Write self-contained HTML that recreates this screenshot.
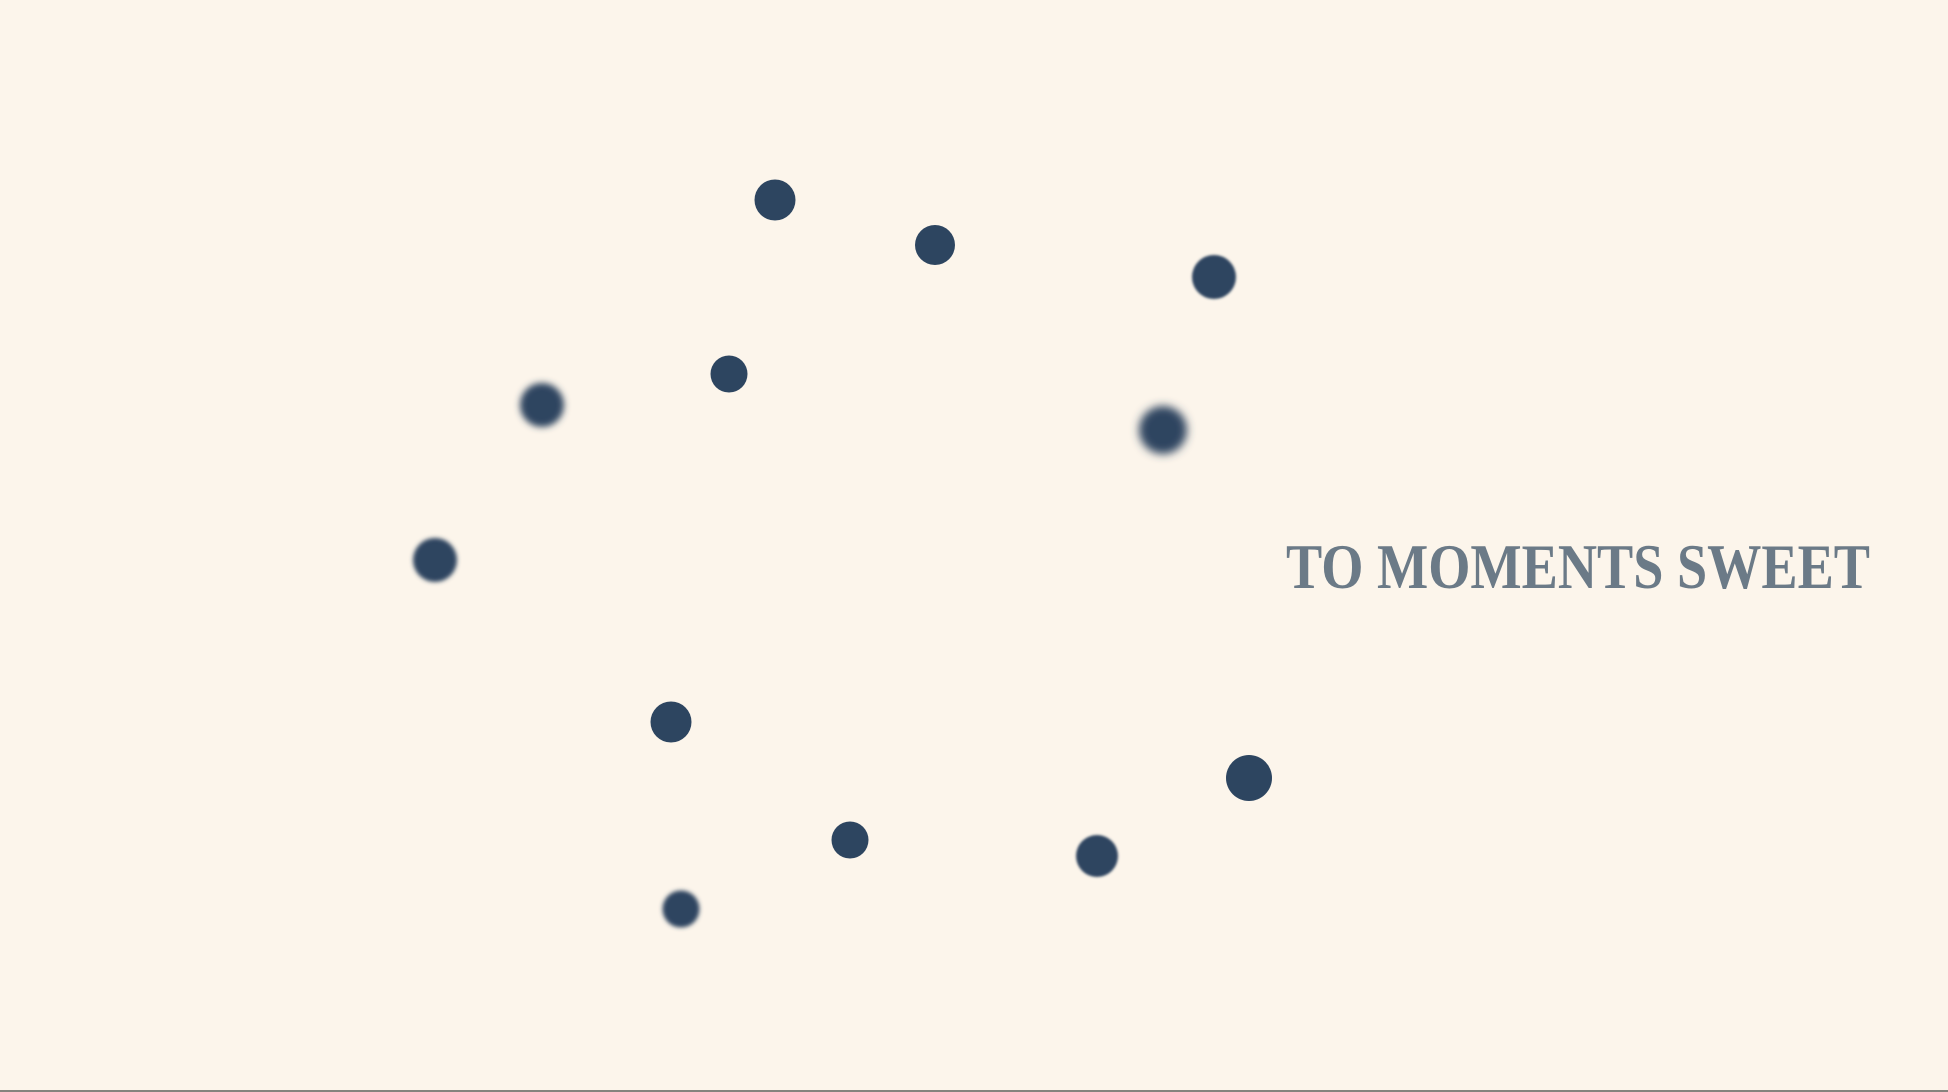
<!DOCTYPE html>
<html><head><meta charset="utf-8"><style>
html,body{margin:0;padding:0;width:1948px;height:1092px;overflow:hidden;background:#fcf5eb}
svg{position:absolute;left:0;top:0}
</style></head><body>
<svg width="1948" height="1092" viewBox="0 0 1948 1092">
<defs>
<filter id="b1" x="-50%" y="-50%" width="200%" height="200%"><feGaussianBlur stdDeviation="1.2"/></filter>
<filter id="b2" x="-50%" y="-50%" width="200%" height="200%"><feGaussianBlur stdDeviation="2"/></filter>
<filter id="b3" x="-50%" y="-50%" width="200%" height="200%"><feGaussianBlur stdDeviation="3.5"/></filter>
<filter id="b4" x="-50%" y="-50%" width="200%" height="200%"><feGaussianBlur stdDeviation="4.5"/></filter>
</defs>
<g fill="#2d4560">
<circle cx="775" cy="200" r="20.5"/>
<circle cx="935" cy="245" r="20"/>
<circle cx="1214" cy="277" r="22" filter="url(#b1)"/>
<circle cx="729" cy="374" r="18.5"/>
<circle cx="542" cy="405" r="22" filter="url(#b3)"/>
<circle cx="1163" cy="430" r="24" filter="url(#b4)"/>
<circle cx="435" cy="560" r="22" filter="url(#b2)"/>
<circle cx="671" cy="722" r="20.5"/>
<circle cx="1249" cy="778" r="23"/>
<circle cx="850" cy="840" r="18.5"/>
<circle cx="1097" cy="856" r="21" filter="url(#b1)"/>
<circle cx="681" cy="909" r="18.5" filter="url(#b2)"/>
</g>
<text x="1286" y="588" font-family="Liberation Serif, serif" font-weight="bold" font-size="64" fill="#6b7a87" textLength="584" lengthAdjust="spacingAndGlyphs">TO MOMENTS SWEET</text>
<rect x="0" y="1090" width="1948" height="2" fill="#85837d"/>
</svg>
</body></html>
